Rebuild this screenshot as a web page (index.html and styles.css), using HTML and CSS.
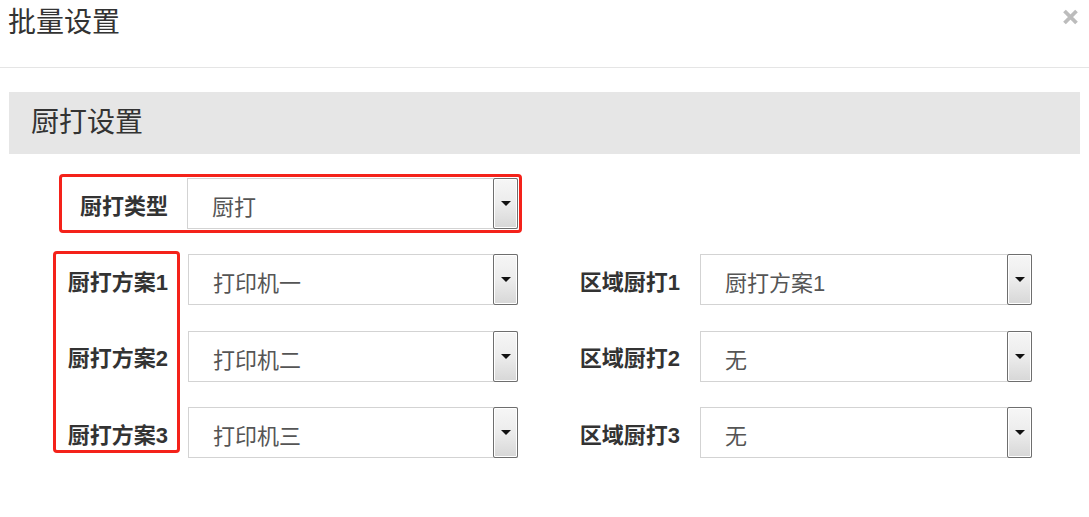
FILE: index.html
```html
<!DOCTYPE html>
<html lang="zh-CN">
<head>
    <meta charset="UTF-8">
    <title>批量设置</title>
    <link rel="stylesheet" href="styles.css">
</head>
<body>
    <div class="dialog-header">
        <h1 class="dialog-title">批量设置</h1>
        <span class="close-btn">
            <svg width="15" height="16" viewBox="0 0 15 16">
                <path d="M1.5 2 L13.5 14 M13.5 2 L1.5 14" stroke="#bcbcbc" stroke-width="3.8" stroke-linecap="butt"/>
            </svg>
        </span>
    </div>

    <div class="section-bar">厨打设置</div>

    <!-- kitchen print type -->
    <div class="type-row">
        <label class="type-label">厨打类型</label>
        <div class="select">
            <span class="select-value">厨打</span>
            <span class="select-btn"><i class="arrow"></i></span>
        </div>
    </div>

    <!-- plans and area printing -->
    <div class="plan-grid">
        <div class="plan-labels">
            <label class="plan-label">厨打方案1</label>
            <label class="plan-label">厨打方案2</label>
            <label class="plan-label">厨打方案3</label>
        </div>

        <div class="select sel-left">
            <span class="select-value">打印机一</span>
            <span class="select-btn"><i class="arrow"></i></span>
        </div>
        <label class="area-label">区域厨打1</label>
        <div class="select sel-right">
            <span class="select-value">厨打方案1</span>
            <span class="select-btn"><i class="arrow"></i></span>
        </div>

        <div class="select sel-left">
            <span class="select-value">打印机二</span>
            <span class="select-btn"><i class="arrow"></i></span>
        </div>
        <label class="area-label">区域厨打2</label>
        <div class="select sel-right">
            <span class="select-value">无</span>
            <span class="select-btn"><i class="arrow"></i></span>
        </div>

        <div class="select sel-left">
            <span class="select-value">打印机三</span>
            <span class="select-btn"><i class="arrow"></i></span>
        </div>
        <label class="area-label">区域厨打3</label>
        <div class="select sel-right">
            <span class="select-value">无</span>
            <span class="select-btn"><i class="arrow"></i></span>
        </div>
    </div>
</body>
</html>
```

FILE: styles.css
```css
body {
    margin: 0;
    background-color: #fff;
    font-family: "Liberation Sans", "Noto Sans CJK SC", sans-serif;
    color: #333;
}
.dialog-header {
    height: 68px;
    box-sizing: border-box;
    border-bottom: 1px solid #e5e5e5;
    display: flex;
    justify-content: space-between;
    align-items: flex-start;
    padding: 6px 11px 0 8px;
}
.dialog-title {
    margin: 0;
    font-size: 28px;
    font-weight: normal;
    line-height: 34px;
    color: #333;
}
.close-btn {
    display: block;
    margin-top: 3px;
    width: 15px;
    height: 16px;
}
.section-bar {
    margin: 24px 9px 0;
    height: 62px;
    line-height: 62px;
    padding-left: 22px;
    background-color: #e6e6e6;
    font-size: 28px;
    color: #333;
}
.type-row {
    display: flex;
    width: 463px;
    box-sizing: border-box;
    margin: 20px 0 0 59px;
    padding: 1px 1px 1px 0;
    border: 3px solid #f4221a;
    border-radius: 4px;
}
.type-label,
.plan-label,
.area-label {
    display: flex;
    align-items: center;
    justify-content: flex-end;
    font-size: 22px;
    font-weight: bold;
    color: #333;
}
.type-label {
    width: 125px;
    padding-right: 19px;
    box-sizing: border-box;
}
.select {
    display: flex;
    width: 331px;
    height: 51px;
    box-sizing: border-box;
    border: 1px solid #d3d3d3;
    background-color: #fff;
}
.select-value {
    flex: 1;
    display: flex;
    align-items: center;
    padding: 3px 0 0 24px;
    font-size: 22px;
    color: #555;
}
.select-btn {
    width: 25px;
    margin: -1px -1px -1px 0;
    box-sizing: border-box;
    border: 1px solid #6e6e6e;
    border-radius: 2px;
    box-shadow: inset 0 0 0 1px #fff;
    background: linear-gradient(#f6f6f6, #ececec 50%, #d7d7d7);
    display: flex;
    align-items: center;
    justify-content: center;
}
.arrow {
    width: 0;
    height: 0;
    border-top: 5px solid #111;
    border-left: 5px solid transparent;
    border-right: 5px solid transparent;
}
.plan-grid {
    display: grid;
    margin: 21px 0 0 53px;
    grid-template-columns: 135px 330px 182px 332px;
    grid-template-rows: repeat(3, 51px);
    row-gap: 25.5px;
}
.plan-labels {
    grid-column: 1;
    grid-row: 1 / 4;
    align-self: start;
    width: 127px;
    height: 202px;
    margin-top: -3px;
    box-sizing: border-box;
    border: 3px solid #f4221a;
    border-radius: 4px;
    display: grid;
    grid-template-rows: repeat(3, 51px);
    row-gap: 25.5px;
}
.plan-label {
    padding-right: 9px;
}
.sel-left {
    grid-column: 2;
    width: 330px;
}
.area-label {
    grid-column: 3;
    padding-right: 20px;
}
.sel-right {
    grid-column: 4;
    width: 332px;
}
```
